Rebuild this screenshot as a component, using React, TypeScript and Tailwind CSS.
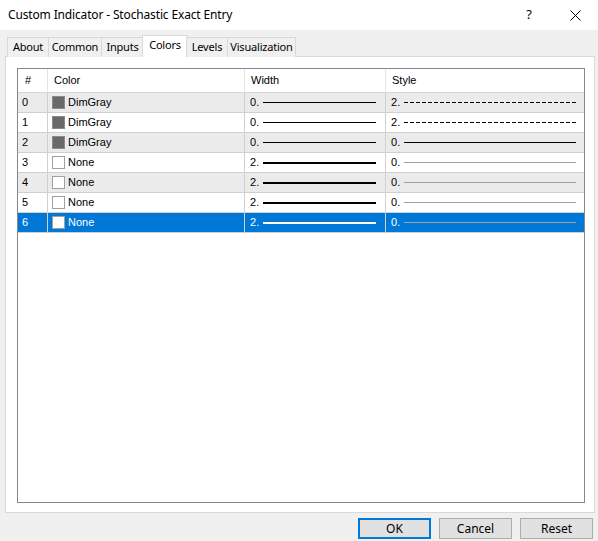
import React from "react";

type Row = {
  idx: number;
  color: string;
  swatch: string;
  width: number;
  style: number;
};

const rows: Row[] = [
  { idx: 0, color: "DimGray", swatch: "#696969", width: 0, style: 2 },
  { idx: 1, color: "DimGray", swatch: "#696969", width: 0, style: 2 },
  { idx: 2, color: "DimGray", swatch: "#696969", width: 0, style: 0 },
  { idx: 3, color: "None", swatch: "#ffffff", width: 2, style: 0 },
  { idx: 4, color: "None", swatch: "#ffffff", width: 2, style: 0 },
  { idx: 5, color: "None", swatch: "#ffffff", width: 2, style: 0 },
  { idx: 6, color: "None", swatch: "#ffffff", width: 2, style: 0 },
];

const tabs = [
  { label: "About", w: "w-[42px]" },
  { label: "Common", w: "w-[54px]" },
  { label: "Inputs", w: "w-[43px]" },
  { label: "Colors", w: "w-[46px]", active: true },
  { label: "Levels", w: "w-[42px]" },
  { label: "Visualization", w: "w-[69px]" },
];

export default function App() {
  const selected = 6;

  return (
    <div className="w-[598px] h-[541px] bg-[#f0f0f0] flex flex-col font-['Noto_Sans',sans-serif] text-black overflow-hidden">
      {/* TITLE BAR */}
      <div className="h-[30px] bg-white flex items-center pl-[8px] shrink-0">
        <span className="text-[12px] tracking-[-0.15px] flex-1">Custom Indicator - Stochastic Exact Entry</span>
        <span className="text-[13px] w-[46px] text-center">?</span>
        <span className="w-[46px] flex justify-center">
          <svg width="11" height="11" viewBox="0 0 11 11">
            <path d="M0.5 0.5L10.5 10.5M10.5 0.5L0.5 10.5" stroke="#000" strokeWidth="1" />
          </svg>
        </span>
      </div>

      {/* TABS */}
      <div className="mt-[5px] h-[22px] flex items-end pl-[7px] relative z-10 shrink-0 text-[11px] tracking-[-0.2px]">
        {tabs.map((t, i) =>
          t.active ? (
            <div
              key={t.label}
              className={`${t.w} h-[22px] -ml-[2px] -mr-[1px] bg-white border border-b-0 border-[#d9d9d9] flex items-center justify-center pb-[2px]`}
            >
              {t.label}
            </div>
          ) : (
            <div
              key={t.label}
              className={`${t.w} h-[20px] ${i > 0 ? "-ml-px" : ""} bg-[#f0f0f0] border border-b-0 border-[#d9d9d9] flex items-center justify-center`}
            >
              {t.label}
            </div>
          )
        )}
      </div>

      {/* PANEL */}
      <div className="-mt-px ml-[5px] mr-[3px] h-[457px] bg-white border border-[#d9d9d9] pt-[11px] pl-[11px] pr-[9px] shrink-0">
        <div className="h-[435px] border border-[#828790] bg-white font-['Liberation_Sans',sans-serif] text-[11px]">
          {/* header */}
          <div className="h-[24px] flex border-b border-[#d5d5d5]">
            <div className="w-[30px] border-r border-[#e5e5e5] flex items-center pl-[7px]">#</div>
            <div className="w-[197px] border-r border-[#e5e5e5] flex items-center pl-[6px]">Color</div>
            <div className="w-[141px] border-r border-[#e5e5e5] flex items-center pl-[6px]">Width</div>
            <div className="flex-1 flex items-center pl-[6px]">Style</div>
          </div>
          {rows.map((r) => {
            const sel = r.idx === selected;
            const bg = sel ? "bg-[#0078d7] text-white" : r.idx % 2 === 0 ? "bg-[#ebebeb]" : "bg-white";
            const line = sel ? "bg-white" : "bg-black";
            return (
              <div key={r.idx} className={`h-[20px] flex border-b border-[#d0d0d0] ${bg}`}>
                <div className="w-[30px] border-r border-[#d0d0d0] flex items-center pl-[4px]">{r.idx}</div>
                <div className="w-[197px] border-r border-[#d0d0d0] flex items-center pl-[4px]">
                  <span
                    className={`w-[13px] h-[13px] border ${r.color === "None" ? "border-[#a0a0a0]" : "border-[#8a8a8a]"} mr-[3px]`}
                    style={{ backgroundColor: r.swatch }}
                  />
                  {r.color}
                </div>
                <div className="w-[141px] border-r border-[#d0d0d0] flex items-center pl-[5px] pr-[9px]">
                  <span className="w-[13px]">{r.width}.</span>
                  <div className={`flex-1 ${r.width === 2 ? "h-[2px]" : "h-px"} ${line}`} />
                </div>
                <div className="flex-1 flex items-center pl-[5px] pr-[8px]">
                  <span className="w-[13px]">{r.style}.</span>
                  {r.style === 2 ? (
                    <div className="flex-1 h-px bg-[repeating-linear-gradient(90deg,#000_0_4px,transparent_4px_6px)]" />
                  ) : r.width === 0 ? (
                    <div className="flex-1 h-px bg-black" />
                  ) : (
                    <div className="flex-1 h-px bg-[#a0a0a0]" />
                  )}
                </div>
              </div>
            );
          })}
        </div>
      </div>

      {/* BUTTONS */}
      <div className="mt-[5px] flex justify-end gap-[8px] pr-[5px] text-[12px]">
        <button className="w-[73px] h-[21px] bg-[#e1e1e1] border-2 border-[#0078d7] flex items-center justify-center">
          OK
        </button>
        <button className="w-[73px] h-[21px] bg-[#e1e1e1] border border-[#adadad] flex items-center justify-center">
          Cancel
        </button>
        <button className="w-[73px] h-[21px] bg-[#e1e1e1] border border-[#adadad] flex items-center justify-center">
          Reset
        </button>
      </div>
    </div>
  );
}
